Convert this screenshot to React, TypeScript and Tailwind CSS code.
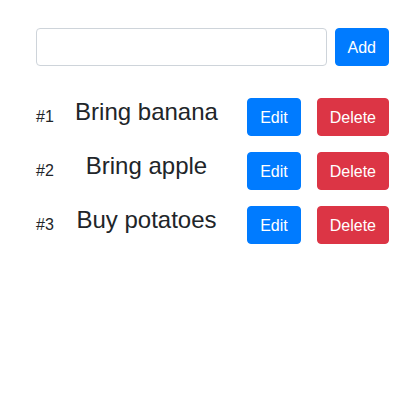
import React from "react";

const items = ["Bring banana", "Bring apple", "Buy potatoes"];

export default function App() {
  return (
    <div
      className="min-h-[402px] w-[415px] bg-white text-[#212529]"
      style={{ fontFamily: '"Liberation Sans", Arial, sans-serif' }}
    >
      <div className="ml-[36px] w-[353px] pt-[28px]">
        <div className="flex gap-[8px]">
          <input
            type="text"
            className="h-[38px] flex-1 rounded-[4px] border border-[#ced4da] px-[12px] text-[16px] outline-none"
          />
          <button className="h-[38px] rounded-[4px] border border-[#007bff] bg-[#007bff] px-[12px] pt-[7px] pb-[5px] text-[16px] leading-[24px] text-white">
            Add
          </button>
        </div>
        <div className="mt-[32px] flex flex-col gap-[16px]">
          {items.map((t, i) => (
            <div key={t} className="flex h-[38px] items-center">
              <span className="text-[16px] leading-[24px]">#{i + 1}</span>
              <span className="mb-[9px] flex-1 text-center text-[24px] leading-[28.8px]">
                {t}
              </span>
              <button className="ml-[8px] h-[38px] rounded-[4px] border border-[#007bff] bg-[#007bff] px-[12px] pt-[7px] pb-[5px] text-[16px] leading-[24px] text-white">
                Edit
              </button>
              <button className="ml-[16px] h-[38px] rounded-[4px] border border-[#dc3545] bg-[#dc3545] px-[12px] pt-[7px] pb-[5px] text-[16px] leading-[24px] text-white">
                Delete
              </button>
            </div>
          ))}
        </div>
      </div>
    </div>
  );
}
